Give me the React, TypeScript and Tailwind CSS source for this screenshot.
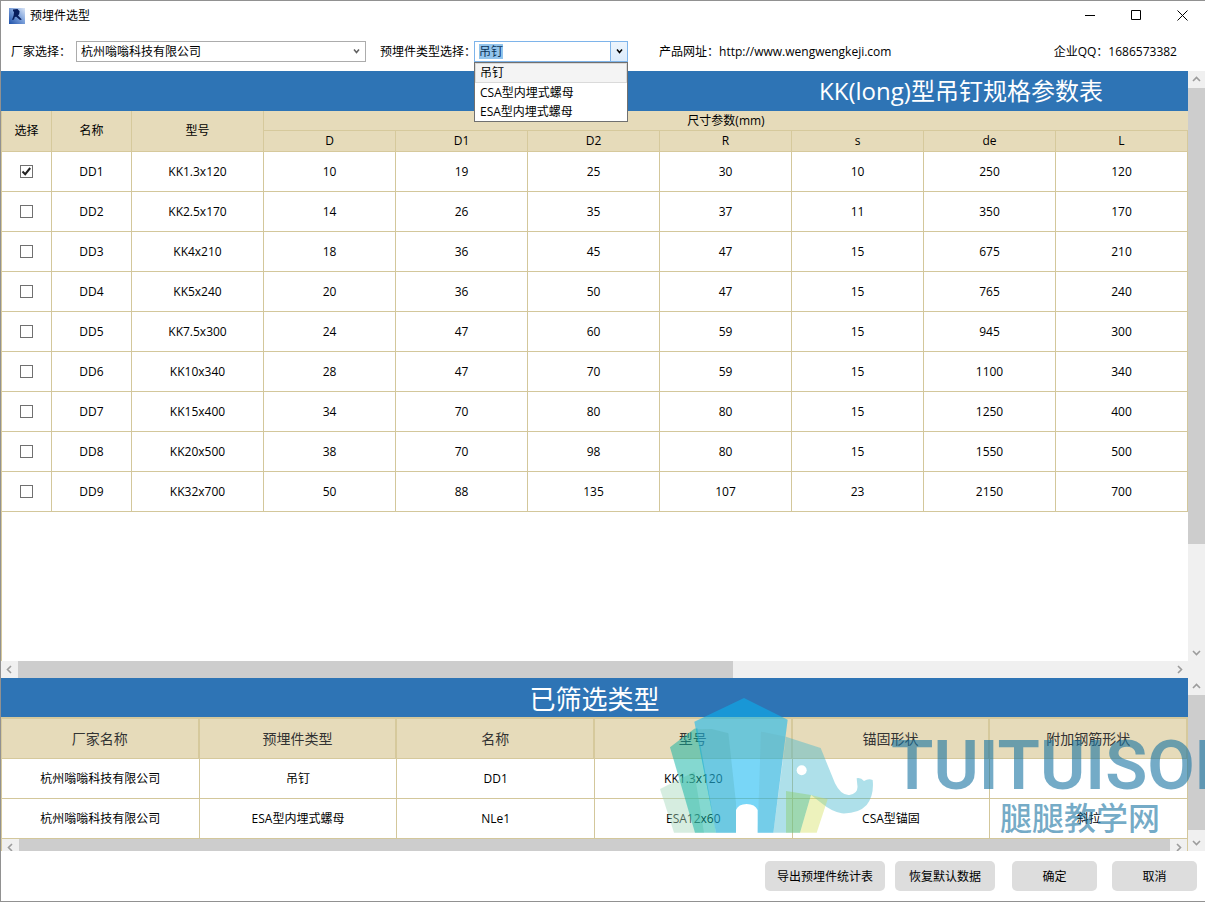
import React, { useState } from "react";

interface Product {
  name: string;
  model: string;
  sizes: number[];
}

interface Selected {
  vendor: string;
  type: string;
  name: string;
  model: string;
  anchor: string;
  rebar: string;
}

const sizeHeads = ["D", "D1", "D2", "R", "s", "de", "L"];

const products: Product[] = [
  { name: "DD1", model: "KK1.3x120", sizes: [10, 19, 25, 30, 10, 250, 120] },
  { name: "DD2", model: "KK2.5x170", sizes: [14, 26, 35, 37, 11, 350, 170] },
  { name: "DD3", model: "KK4x210", sizes: [18, 36, 45, 47, 15, 675, 210] },
  { name: "DD4", model: "KK5x240", sizes: [20, 36, 50, 47, 15, 765, 240] },
  { name: "DD5", model: "KK7.5x300", sizes: [24, 47, 60, 59, 15, 945, 300] },
  { name: "DD6", model: "KK10x340", sizes: [28, 47, 70, 59, 15, 1100, 340] },
  { name: "DD7", model: "KK15x400", sizes: [34, 70, 80, 80, 15, 1250, 400] },
  { name: "DD8", model: "KK20x500", sizes: [38, 70, 98, 80, 15, 1550, 500] },
  { name: "DD9", model: "KK32x700", sizes: [50, 88, 135, 107, 23, 2150, 700] },
];

const selectedHeads = [
  "厂家名称",
  "预埋件类型",
  "名称",
  "型号",
  "锚固形状",
  "附加钢筋形状",
];

const selectedRows: Selected[] = [
  {
    vendor: "杭州嗡嗡科技有限公司",
    type: "吊钉",
    name: "DD1",
    model: "KK1.3x120",
    anchor: "",
    rebar: "",
  },
  {
    vendor: "杭州嗡嗡科技有限公司",
    type: "ESA型内埋式螺母",
    name: "NLe1",
    model: "ESA12x60",
    anchor: "CSA型锚固",
    rebar: "斜拉",
  },
];

const typeOptions = ["吊钉", "CSA型内埋式螺母", "ESA型内埋式螺母"];

type Direction = "up" | "down" | "left" | "right";

const chevrons: Record<Direction, string> = {
  up: "M1 6 4.5 2.5 8 6",
  down: "M1 3 4.5 6.5 8 3",
  left: "M6 1 2.5 4.5 6 8",
  right: "M3 1 6.5 4.5 3 8",
};

function Chevron({ dir }: { dir: Direction }) {
  return (
    <svg width="9" height="9" viewBox="0 0 9 9" fill="none">
      <path d={chevrons[dir]} stroke="#9c9c9c" strokeWidth="1.6" />
    </svg>
  );
}

function SelectArrow({ color }: { color: string }) {
  return (
    <svg width="7" height="7" viewBox="0 0 7 7" fill="none">
      <path d="M1 1.5 3.5 4.5 6 1.5" stroke={color} strokeWidth="1.5" />
    </svg>
  );
}

function ScrollButton({ dir }: { dir: Direction }) {
  return (
    <button
      type="button"
      aria-label={dir}
      className="flex size-[17px] shrink-0 items-center justify-center bg-[#f0f0f0]"
    >
      <Chevron dir={dir} />
    </button>
  );
}

function VerticalBar({ size }: { size: number }) {
  return (
    <div className="flex w-[17px] shrink-0 flex-col overflow-hidden bg-[#f0f0f0]">
      <ScrollButton dir="up" />
      <div className="min-h-0 flex-1">
        <div className="bg-[#cdcdcd]" style={{ height: `${size}%` }} />
      </div>
      <ScrollButton dir="down" />
    </div>
  );
}

function HorizontalBar({ size }: { size: number }) {
  return (
    <div className="flex h-[17px] shrink-0 bg-[#f0f0f0]">
      <ScrollButton dir="left" />
      <div className="flex-1">
        <div className="h-full bg-[#cdcdcd]" style={{ width: `${size}%` }} />
      </div>
      <ScrollButton dir="right" />
    </div>
  );
}

function AppIcon() {
  return (
    <svg width="16" height="16" viewBox="0 0 16 16">
      <defs>
        <linearGradient id="iconBg" x1="0" y1="1" x2="1" y2="0">
          <stop offset="0" stopColor="#1c4fa8" />
          <stop offset="0.55" stopColor="#7fa3dc" />
          <stop offset="1" stopColor="#dbe6f7" />
        </linearGradient>
      </defs>
      <rect width="16" height="16" fill="url(#iconBg)" />
      <path
        d="M4 1.5 8.5 1 10.6 3.2 10.2 6 9 7.4 12.8 11.4 11 12 7.2 8.8 5.8 9 5 11.6 3 12 4.6 7.6 5 4 4 3Z"
        fill="#071d5c"
      />
    </svg>
  );
}

function TitleBar() {
  return (
    <header className="flex h-[29px] shrink-0 items-center pl-2">
      <AppIcon />
      <h1 className="ml-[5px] flex-1">预埋件选型</h1>
      <button
        type="button"
        aria-label="最小化"
        className="flex h-full w-[45px] items-center justify-center"
      >
        <svg width="11" height="11" viewBox="0 0 11 11">
          <path d="M0 5.5H10" stroke="#000" />
        </svg>
      </button>
      <button
        type="button"
        aria-label="最大化"
        className="flex h-full w-[46px] items-center justify-center"
      >
        <svg width="11" height="11" viewBox="0 0 11 11" fill="none">
          <path d="M.5.5H9.5V9.5H.5Z" stroke="#000" />
        </svg>
      </button>
      <button
        type="button"
        aria-label="关闭"
        className="flex h-full w-[46px] items-center justify-center"
      >
        <svg width="11" height="11" viewBox="0 0 11 11">
          <path d="M.5.5 10.5 10.5M10.5.5.5 10.5" stroke="#000" />
        </svg>
      </button>
    </header>
  );
}

function Toolbar() {
  const [type, setType] = useState(typeOptions[0]);

  return (
    <div className="flex h-[41px] shrink-0 items-center whitespace-nowrap pl-[10px] pr-7 pt-0.5">
      <label htmlFor="vendor" className="w-[65px]">
        厂家选择：
      </label>
      <div className="relative w-[290px]">
        <select
          id="vendor"
          className="block h-[21px] w-full appearance-none border border-[#acacac] bg-white px-1"
        >
          <option>杭州嗡嗡科技有限公司</option>
        </select>
        <span className="pointer-events-none absolute inset-y-0 right-[6px] flex items-center">
          <SelectArrow color="#606060" />
        </span>
      </div>

      <label htmlFor="type" className="ml-[14px] w-[94px]">
        预埋件类型选择：
      </label>
      <div className="relative w-[154px]">
        <select
          id="type"
          value={type}
          onChange={(e) => setType(e.target.value)}
          className="block h-[21px] w-full appearance-none border border-[#7eb4ea] bg-white bg-[linear-gradient(#92c4ec,#92c4ec)] bg-[length:24px_15px] bg-[position:4px_2px] bg-no-repeat px-1 text-[#0b3358]"
        >
          {typeOptions.map((option) => (
            <option key={option}>{option}</option>
          ))}
        </select>
        <span className="pointer-events-none absolute inset-y-0 right-0 flex w-[18px] items-center justify-center border border-[#7eb4ea] bg-gradient-to-b from-[#ecf4fc] to-[#dcecfc]">
          <SelectArrow color="#000000" />
        </span>
        <ul
          role="listbox"
          className="absolute left-0 top-[21px] z-10 w-full border border-[#707070] bg-white"
        >
          {typeOptions.map((option) => (
            <li
              key={option}
              role="option"
              aria-selected={option === type}
              className={
                option === type
                  ? "border border-[#dadada] bg-[#f4f4f4] px-1 leading-[18px]"
                  : "px-[5px] leading-[19px]"
              }
            >
              {option}
            </li>
          ))}
        </ul>
      </div>

      <p className="ml-[31px]">
        产品网址：
        <a href="http://www.wengwengkeji.com">http://www.wengwengkeji.com</a>
      </p>
      <p className="ml-auto">企业QQ：1686573382</p>
    </div>
  );
}

function ProductTable() {
  const [checked, setChecked] = useState<string[]>(["DD1"]);

  const toggle = (name: string) => {
    setChecked((prev) =>
      prev.includes(name) ? prev.filter((n) => n !== name) : [...prev, name]
    );
  };

  const head = "border-b border-r border-[#d6c99c] p-0 font-normal";
  const cell = "border-b border-r border-[#d3c79b] p-0";

  return (
    <table className="w-full table-fixed border-separate border-spacing-0 text-center">
      <colgroup>
        <col className="w-[50px]" />
        <col className="w-[80px]" />
        <col className="w-[132px]" />
        {sizeHeads.map((h) => (
          <col key={h} />
        ))}
      </colgroup>
      <thead className="bg-[#e6dbba]">
        <tr className="h-5">
          <th rowSpan={2} className={head}>
            选择
          </th>
          <th rowSpan={2} className={head}>
            名称
          </th>
          <th rowSpan={2} className={head}>
            型号
          </th>
          <th
            colSpan={7}
            className="border-b border-[#d6c99c] p-0 font-normal leading-[19px]"
          >
            尺寸参数(mm)
          </th>
        </tr>
        <tr className="h-[21px]">
          {sizeHeads.map((h) => (
            <th key={h} className={`${head} leading-5`}>
              {h}
            </th>
          ))}
        </tr>
      </thead>
      <tbody>
        {products.map((p) => (
          <tr key={p.name} className="h-10">
            <td className={cell}>
              <label className="relative mx-auto block size-[13px]">
                <input
                  type="checkbox"
                  aria-label={p.name}
                  checked={checked.includes(p.name)}
                  onChange={() => toggle(p.name)}
                  className="block size-[13px] appearance-none border border-[#707070] bg-white"
                />
                {checked.includes(p.name) && (
                  <svg
                    width="13"
                    height="13"
                    viewBox="0 0 13 13"
                    fill="none"
                    className="pointer-events-none absolute inset-0"
                  >
                    <path d="M2.5 6.5 5.2 9.2 10.2 3" stroke="#212121" strokeWidth="2" />
                  </svg>
                )}
              </label>
            </td>
            <td className={cell}>{p.name}</td>
            <td className={cell}>{p.model}</td>
            {p.sizes.map((size, i) => (
              <td key={sizeHeads[i]} className={cell}>
                {size}
              </td>
            ))}
          </tr>
        ))}
      </tbody>
    </table>
  );
}

function SelectedTable() {
  const cell = "border-b border-r border-[#d3c79b] p-0";

  return (
    <table className="w-full table-fixed border-separate border-spacing-0 text-center">
      <thead className="bg-[#e6dbba] text-sm text-[#333333]">
        <tr className="h-[42px]">
          {selectedHeads.map((h) => (
            <th
              key={h}
              className="border-b border-r-2 border-t-2 border-[#d6c99c] p-0 font-normal"
            >
              {h}
            </th>
          ))}
        </tr>
      </thead>
      <tbody>
        {selectedRows.map((row) => (
          <tr key={row.name} className="h-10">
            <td className={cell}>{row.vendor}</td>
            <td className={cell}>{row.type}</td>
            <td className={cell}>{row.name}</td>
            <td className={cell}>{row.model}</td>
            <td className={cell}>{row.anchor}</td>
            <td className={cell}>{row.rebar}</td>
          </tr>
        ))}
      </tbody>
    </table>
  );
}

function Watermark() {
  return (
    <div className="pointer-events-none absolute left-[639px] right-0 top-[-8px] h-[167px] overflow-hidden text-[#1773a2]/60">
      <svg width="240" height="167" viewBox="0 0 720 501">
        <path
          d="M60 357 163 305 192 488H102Z"
          fill="#a4d6ba"
          fillOpacity="0.45"
        />
        <path
          d="M90 232 163 176 172 175 228 488H165Z"
          fill="#09b1a1"
          fillOpacity="0.5"
        />
        <path
          d="M438 200 440 201 542 234 585 340Q603 377 628 375 656 372 652 345L650 325Q662 322 672 333 685 325 698 330 703 375 680 405 655 432 605 430 575 425 545 400L513 375 480 488H400Z"
          fill="#3eb5cd"
          fillOpacity="0.42"
        />
        <path
          d="M163 155 312 84 443 149 400 488H353V420Q345 402 320 402 295 402 288 420V488H228Z"
          fill="#0ab4f0"
          fillOpacity="0.55"
        />
        <path
          d="M168 178 215 177 265 190 288 400V488H228Z"
          fill="#4aa2a4"
          fillOpacity="0.25"
        />
        <path d="M363 185 438 200 400 488H353Z" fill="#64aab4" fillOpacity="0.2" />
        <path d="M438 363 513 375 480 488H438Z" fill="#86cc5c" fillOpacity="0.4" />
        <path d="M513 375 563 388 530 488H480Z" fill="#d0dc50" fillOpacity="0.38" />
        <circle cx="485" cy="301" r="15" fill="#fff" />
      </svg>
      <span className="absolute left-[251px] top-[60px] whitespace-nowrap font-[Roboto,sans-serif] text-[69px] font-semibold leading-[72px]">
        TUITUISOFT
      </span>
      <span className="absolute left-[360px] top-[130px] whitespace-nowrap text-[32px] font-medium leading-[36px]">
        腿腿教学网
      </span>
    </div>
  );
}

export default function App() {
  const button = "h-[30px] rounded-[5px] bg-[#dddddd] pt-0.5";

  return (
    <div className="flex min-h-screen flex-col overflow-hidden border-y border-l border-[#919191] bg-white font-['Open_Sans','Noto_Sans_CJK_SC',sans-serif] text-[12px] leading-4 text-black">
      <TitleBar />
      <Toolbar />

      <section className="flex flex-1 flex-col">
        <div className="flex flex-1">
          <div className="flex min-w-0 flex-1 flex-col overflow-hidden">
            <h2 className="h-10 w-[1920px] bg-[#2e74b5] text-center text-2xl leading-10 text-white">
              KK(long)型吊钉规格参数表
            </h2>
            <div className="flex-1 border-l border-[#d6c99c]">
              <ProductTable />
            </div>
          </div>
          <VerticalBar size={82} />
        </div>
        <div className="flex">
          <div className="min-w-0 flex-1">
            <HorizontalBar size={62} />
          </div>
          <div className="w-[17px] bg-[#f0f0f0]" />
        </div>
      </section>

      <section className="relative flex h-[173px] shrink-0">
        <div className="min-w-0 flex-1 overflow-hidden">
          <h2 className="h-[39px] bg-[#2e74b5] text-center text-[26px] leading-[42px] text-white">
            已筛选类型
          </h2>
          <div className="border-l border-[#d6c99c]">
            <SelectedTable />
            <div className="border-r border-[#d6c99c]">
              <HorizontalBar size={100} />
            </div>
          </div>
        </div>
        <VerticalBar size={97} />
        <Watermark />
      </section>

      <footer className="flex h-[50px] shrink-0 items-center justify-end pr-2">
        <button type="button" className={`${button} w-[120px]`}>
          导出预埋件统计表
        </button>
        <button type="button" className={`${button} ml-[10px] w-[100px]`}>
          恢复默认数据
        </button>
        <button type="button" className={`${button} ml-[17px] w-[85px]`}>
          确定
        </button>
        <button type="button" className={`${button} ml-[15px] w-[85px]`}>
          取消
        </button>
      </footer>
    </div>
  );
}
